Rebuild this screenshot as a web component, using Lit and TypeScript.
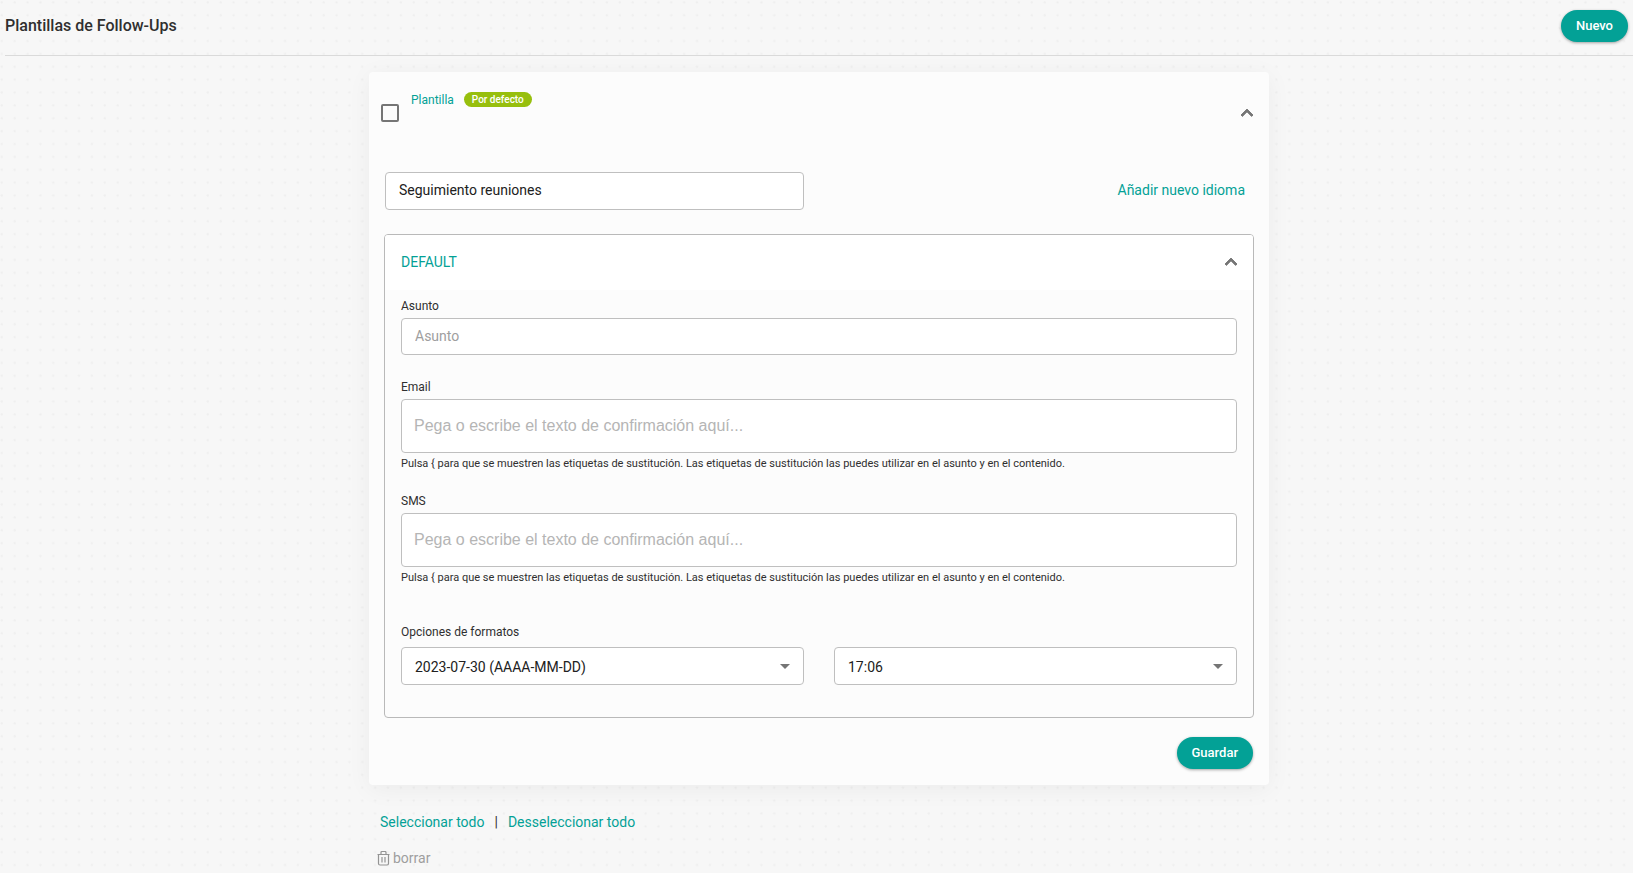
import { LitElement, html, css, svg } from "lit";
import { customElement, property, state } from "lit/decorators.js";

const chevronUp = html`<svg width="24" height="24" viewBox="0 0 24 24" aria-hidden="true">
  <path d="M12 8l-6 6 1.41 1.41L12 10.83l4.59 4.58L18 14z" fill="#757575" stroke="#757575" stroke-width=".9" />
</svg>`;

const trashLines = svg`<path d="M.5 3.5h12M4 3.5V1.500q0-1 1-1h3q1 0 1 1v2M1.500 3.500v9q0 1.500 1.500 1.500h7q1.500 0 1.500-1.500v-9M5 6v5.500M8 6v5.500" />`;

@customElement("follow-up-language")
export class FollowUpLanguage extends LitElement {
  @property() name = "";
  @state() private open = true;

  static styles = css`
    :host {
      display: block;
      border: 1px solid #b9b9b9;
      border-radius: 4px;
      overflow: hidden;
    }
    * {
      box-sizing: border-box;
    }
    .head {
      display: flex;
      align-items: center;
      justify-content: space-between;
      width: 100%;
      height: 55px;
      padding: 0 10px 2px 16px;
      border: 0;
      background: #fff;
      color: #03a196;
      font: 14px/20px Roboto, sans-serif;
      cursor: pointer;
    }
    .body {
      padding: 8px 16px 32px;
    }
    .label {
      display: block;
      font-size: 12px;
      line-height: 16px;
      margin-bottom: 4px;
    }
    .field {
      display: block;
      width: 100%;
      border: 1px solid #bfbfbf;
      border-radius: 4px;
      background: #fff;
      color: #212121;
      margin: 0;
      outline-color: #03a196;
    }
    .line {
      height: 37px;
      padding: 0 13px 2px;
      font: 14px/20px Roboto, sans-serif;
      margin-bottom: 24px;
    }
    .line::placeholder {
      color: #9e9e9e;
    }
    .area {
      height: 54px;
      padding: 17px 12px;
      font: 16px/18px "Liberation Sans", Arial, sans-serif;
      resize: none;
      overflow: hidden;
    }
    .area::placeholder {
      color: #b5b5b5;
    }
    .hint {
      margin: 3px 0 21px;
      font-size: 11px;
      line-height: 16px;
    }
    .formats {
      padding: 17px 0 0;
      min-width: 0;
    }
    .caption {
      font-size: 12px;
      line-height: 16px;
      margin-bottom: 7px;
    }
    .pair {
      display: grid;
      grid-template-columns: 1fr 1fr;
      gap: 30px;
    }
    .pick {
      display: grid;
      align-items: center;
    }
    .pick > * {
      grid-area: 1 / 1;
    }
    .select {
      appearance: none;
      height: 38px;
      padding: 2px 32px 0 13px;
      font: 14px/20px Roboto, sans-serif;
    }
    .arrow {
      justify-self: end;
      margin-right: 14px;
      pointer-events: none;
    }
  `;

  private area(id: string, label: string) {
    return html`
      <label class="label" for=${id}>${label}</label>
      <textarea class="field area" id=${id} rows="1" aria-describedby="${id}-hint"
        placeholder="Pega o escribe el texto de confirmación aquí..."></textarea>
      <p class="hint" id="${id}-hint">Pulsa { para que se muestren las etiquetas de sustitución. Las etiquetas de sustitución las puedes utilizar en el asunto y en el contenido.</p>
    `;
  }

  private picker(label: string, value: string) {
    return html`<div class="pick">
      <select class="field select" aria-label=${label}>
        <option>${value}</option>
      </select>
      <svg class="arrow" width="10" height="5" viewBox="0 0 10 5" aria-hidden="true">
        <path d="M0 0h10L5 5z" fill="#757575" />
      </svg>
    </div>`;
  }

  render() {
    return html`
      <button class="head" type="button" aria-expanded=${this.open} @click=${() => (this.open = !this.open)}>
        <span>${this.name}</span>${chevronUp}
      </button>
      <div class="body" ?hidden=${!this.open}>
        <label class="label" for="subject">Asunto</label>
        <input class="field line" id="subject" type="text" placeholder="Asunto" />
        ${this.area("email", "Email")} ${this.area("sms", "SMS")}
        <div class="formats" role="group" aria-labelledby="formats">
          <div class="caption" id="formats">Opciones de formatos</div>
          <div class="pair">
            ${this.picker("Fecha", "2023-07-30 (AAAA-MM-DD)")} ${this.picker("Hora", "17:06")}
          </div>
        </div>
      </div>
    `;
  }
}

@customElement("app-root")
export class AppRoot extends LitElement {
  @state() private selected = false;

  static styles = css`
    :host {
      display: block;
      box-sizing: border-box;
      min-height: 100vh;
      padding-left: 5px;
      color: #2f2f2f;
      font: 14px/20px Roboto, sans-serif;
      background: #f7f7f7
        url("data:image/svg+xml,%3Csvg xmlns='http://www.w3.org/2000/svg' width='103' height='103' viewBox='0 0 103 103'%3E%3Cdefs%3E%3Cpattern id='d' width='12.875' height='12.875' patternUnits='userSpaceOnUse'%3E%3Cpath d='M.6 2.400h2.400M1.800 1.200v2.400' stroke='%23ededed' stroke-width='.9'/%3E%3C/pattern%3E%3C/defs%3E%3Crect width='103' height='103' fill='url(%23d)'/%3E%3C/svg%3E");
    }
    * {
      box-sizing: border-box;
    }
    .top {
      display: flex;
      align-items: center;
      justify-content: space-between;
      padding: 10px 5px 13px 0;
      border-bottom: 1px solid #dadada;
    }
    .title {
      margin: 0;
      font-size: 16px;
      line-height: 24px;
      font-weight: 500;
    }
    .button {
      height: 32px;
      padding: 0 15px;
      border: 0;
      border-radius: 16px;
      background: #03a196;
      color: #fff;
      font: 500 13px/20px Roboto, sans-serif;
      box-shadow: 0 1px 3px rgba(0, 0, 0, 0.35);
      cursor: pointer;
    }
    .main {
      max-width: 900px;
      margin: 16px auto 0;
    }
    .card {
      padding: 20px 15px 16px;
      border-radius: 4px;
      background: #fcfcfc;
      box-shadow: 0 4px 24px rgba(0, 0, 0, 0.05);
    }
    .head {
      display: flex;
      align-items: center;
      margin: 0 -5px 0 -3px;
      height: 42px;
    }
    .check {
      appearance: none;
      width: 18px;
      height: 18px;
      margin: 0 12px 0 0;
      border: 2px solid #757575;
      border-radius: 2px;
    }
    .check:checked {
      background: #03a196;
      border-color: #03a196;
    }
    .tag {
      display: flex;
      align-items: flex-start;
      gap: 10px;
      align-self: flex-start;
      font-size: 12px;
      line-height: 16px;
      color: #03a196;
    }
    .badge {
      padding: 0 8px;
      border-radius: 8px;
      background: #97bf0d;
      color: #fff;
      font-size: 10px;
      line-height: 15px;
      font-weight: 500;
    }
    .toggle {
      margin-left: auto;
      padding: 0;
      border: 0;
      background: none;
      height: 24px;
      cursor: pointer;
    }
    .row {
      display: flex;
      align-items: center;
      justify-content: space-between;
      margin: 38px 9px 24px 1px;
    }
    .name {
      width: 419px;
      height: 38px;
      padding: 0 13px 2px;
      border: 1px solid #bfbfbf;
      border-radius: 4px;
      background: #fff;
      color: #212121;
      font: 14px/20px Roboto, sans-serif;
      outline-color: #03a196;
    }
    .link {
      color: #03a196;
      text-decoration: none;
    }
    .row .link {
      padding-bottom: 2px;
    }
    .save {
      display: flex;
      justify-content: flex-end;
      margin: 19px 1px 0 0;
    }
    .bulk {
      display: flex;
      gap: 10px;
      margin: 27px 0 16px 11px;
    }
    .delete {
      display: flex;
      align-items: center;
      gap: 3px;
      margin-left: 8px;
      padding: 0;
      border: 0;
      background: none;
      color: #9e9e9e;
      font: 14px/20px Roboto, sans-serif;
      cursor: pointer;
    }
    .trash {
      fill: none;
      stroke: #949494;
      stroke-width: 1.2;
    }
  `;

  private select(value: boolean) {
    return (event: Event) => {
      event.preventDefault();
      this.selected = value;
    };
  }

  render() {
    return html`
      <header class="top">
        <h1 class="title">Plantillas de Follow-Ups</h1>
        <button class="button" type="button">Nuevo</button>
      </header>
      <main class="main">
        <section class="card">
          <div class="head">
            <input class="check" id="template" type="checkbox" .checked=${this.selected}
              @change=${(e: Event) => (this.selected = (e.target as HTMLInputElement).checked)} />
            <div class="tag">
              <label for="template">Plantilla</label>
              <span class="badge">Por defecto</span>
            </div>
            <button class="toggle" type="button" aria-label="Contraer">${chevronUp}</button>
          </div>
          <div class="row">
            <input class="name" type="text" aria-label="Nombre" value="Seguimiento reuniones" />
            <a class="link" href="#">Añadir nuevo idioma</a>
          </div>
          <follow-up-language name="DEFAULT"></follow-up-language>
          <div class="save"><button class="button" type="button">Guardar</button></div>
        </section>
        <div class="bulk">
          <a class="link" href="#" @click=${this.select(true)}>Seleccionar todo</a>
          <span>|</span>
          <a class="link" href="#" @click=${this.select(false)}>Desseleccionar todo</a>
        </div>
        <button class="delete" type="button">
          <svg class="trash" width="13" height="15" viewBox="0 0 13 15" aria-hidden="true">${trashLines}</svg>
          borrar
        </button>
      </main>
    `;
  }
}
